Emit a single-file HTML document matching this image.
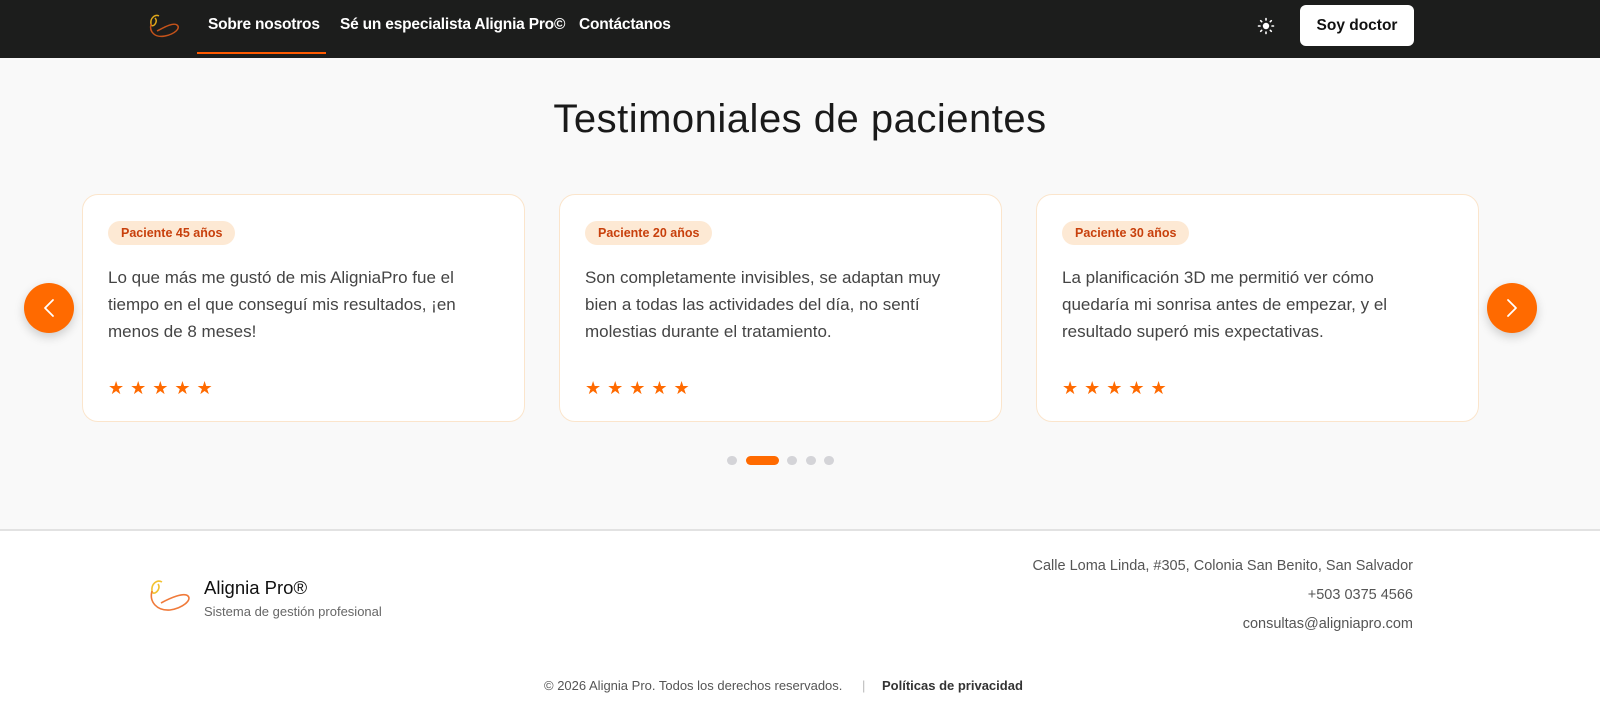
<!DOCTYPE html>
<html><head><meta charset="utf-8"><style>
*{margin:0;padding:0;box-sizing:border-box}
body{width:1600px;height:725px;overflow:hidden;font-family:"Liberation Sans",sans-serif;background:#fff;position:relative}
.hdr{position:absolute;left:0;top:0;width:1600px;height:58px;background:#1c1d1c}
.nav{position:absolute;top:16px;color:#fff;font-size:15.5px;font-weight:bold;letter-spacing:-0.2px}
.main{position:absolute;top:58px;left:0;width:1600px;height:473px;background:#f9f9f9;border-bottom:2px solid #e2e2e2}
h1{position:absolute;top:97px;left:0;width:1600px;text-align:center;font-size:40px;font-weight:normal;color:#1a1a1a;letter-spacing:0.5px}
.card{position:absolute;top:194px;width:443px;height:228px;background:#fff;border:1.5px solid #fbe5cc;border-radius:16px}
.badge{position:absolute;left:25px;top:26px;height:24px;padding:0 13px;line-height:24px;background:#fde9d4;color:#c8400c;font-size:12.5px;font-weight:bold;border-radius:12px}
.txt{position:absolute;left:25px;top:69px;width:372px;font-size:17px;line-height:27px;color:#444}
.stars{position:absolute;left:25px;top:183px;color:#ff6a00;font-size:18px;letter-spacing:6px}
.arr{position:absolute;top:283px;width:50px;height:50px;border-radius:50%;background:#ff6a00;box-shadow:0 4px 10px rgba(0,0,0,.18)}
.dot{position:absolute;top:456px;height:9px;width:10px;border-radius:5px;background:#d4d4d8}
.fr{position:absolute;right:187px;font-size:14.5px;color:#555;text-align:right}
</style></head><body>
<div class="hdr">
<svg style="position:absolute;left:147px;top:12px" width="36" height="28" viewBox="0 0 36 28"><path d="M12 4 C8 2 3 6 4 12 C5 17 12 10 8 6" fill="none" stroke="#e0a81a" stroke-width="1.5"/><path d="M4 12 C2 20 8 26 18 24 C28 22 34 16 30 13 C26 10 16 16 10 19" fill="none" stroke="#c5531a" stroke-width="1.5"/></svg>
<div class="nav" style="left:208px">Sobre nosotros</div>
<div style="position:absolute;left:197px;top:52px;width:129px;height:2px;background:#ff5a00"></div>
<div class="nav" style="left:340px">Sé un especialista Alignia Pro©</div>
<div class="nav" style="left:579px">Contáctanos</div>
<svg style="position:absolute;left:1257px;top:17px" width="18" height="18" viewBox="0 0 18 18" stroke="#fff" stroke-width="1.6" stroke-linecap="round"><circle cx="9" cy="9" r="3.2" fill="#fff" stroke="none"/><path d="M9 1.5v1.5M9 15v1.5M1.5 9h1.5M15 9h1.5M3.7 3.7l1 1M13.3 13.3l1 1M3.7 14.3l1-1M13.3 4.7l1-1"/></svg>
<div style="position:absolute;left:1300px;top:5px;width:114px;height:41px;background:#fff;border-radius:6px;text-align:center;line-height:41px;font-size:15.5px;font-weight:bold;color:#111">Soy doctor</div>
</div>
<div class="main"></div>
<h1>Testimoniales de pacientes</h1>
<div class="card" style="left:82px"><div class="badge">Paciente 45 años</div><div class="txt">Lo que más me gustó de mis AligniaPro fue el tiempo en el que conseguí mis resultados, ¡en menos de 8 meses!</div><div class="stars">★★★★★</div></div>
<div class="card" style="left:559px"><div class="badge">Paciente 20 años</div><div class="txt">Son completamente invisibles, se adaptan muy bien a todas las actividades del día, no sentí molestias durante el tratamiento.</div><div class="stars">★★★★★</div></div>
<div class="card" style="left:1036px"><div class="badge">Paciente 30 años</div><div class="txt">La planificación 3D me permitió ver cómo quedaría mi sonrisa antes de empezar, y el resultado superó mis expectativas.</div><div class="stars">★★★★★</div></div>
<div class="arr" style="left:24px"><svg width="50" height="50"><path d="M29 17l-8 8 8 8" fill="none" stroke="#fff" stroke-width="1.8" stroke-linecap="round" stroke-linejoin="round"/></svg></div>
<div class="arr" style="left:1487px"><svg width="50" height="50"><path d="M21 17l8 8-8 8" fill="none" stroke="#fff" stroke-width="1.8" stroke-linecap="round" stroke-linejoin="round"/></svg></div>
<div class="dot" style="left:727px"></div>
<div class="dot" style="left:746px;width:33px;background:#ff6a00"></div>
<div class="dot" style="left:787px"></div>
<div class="dot" style="left:806px"></div>
<div class="dot" style="left:824px"></div>
<svg style="position:absolute;left:148px;top:578px" width="46" height="38" viewBox="0 0 46 38"><path d="M14 4 C9 1 3 6 4 13 C5 19 14 11 10 6" fill="none" stroke="#f2c230" stroke-width="1.6"/><path d="M4 13 C1 24 9 33 22 32 C35 30 44 22 40 18 C36 14 22 20 13 25" fill="none" stroke="#f07a3a" stroke-width="1.6"/></svg>
<div style="position:absolute;left:204px;top:577px;font-size:18.5px;color:#111">Alignia Pro®</div>
<div style="position:absolute;left:204px;top:604px;font-size:13px;color:#666">Sistema de gestión profesional</div>
<div class="fr" style="top:558px">Calle Loma Linda, #305, Colonia San Benito, San Salvador</div>
<div class="fr" style="top:587px">+503 0375 4566</div>
<div class="fr" style="top:616px">consultas@aligniapro.com</div>
<div style="position:absolute;left:544px;top:678px;font-size:13px;color:#555">© 2026 Alignia Pro. Todos los derechos reservados.</div>
<div style="position:absolute;left:862px;top:678px;font-size:13px;color:#bbb">|</div>
<div style="position:absolute;left:882px;top:678px;font-size:13px;font-weight:bold;color:#333">Políticas de privacidad</div>
</body></html>
